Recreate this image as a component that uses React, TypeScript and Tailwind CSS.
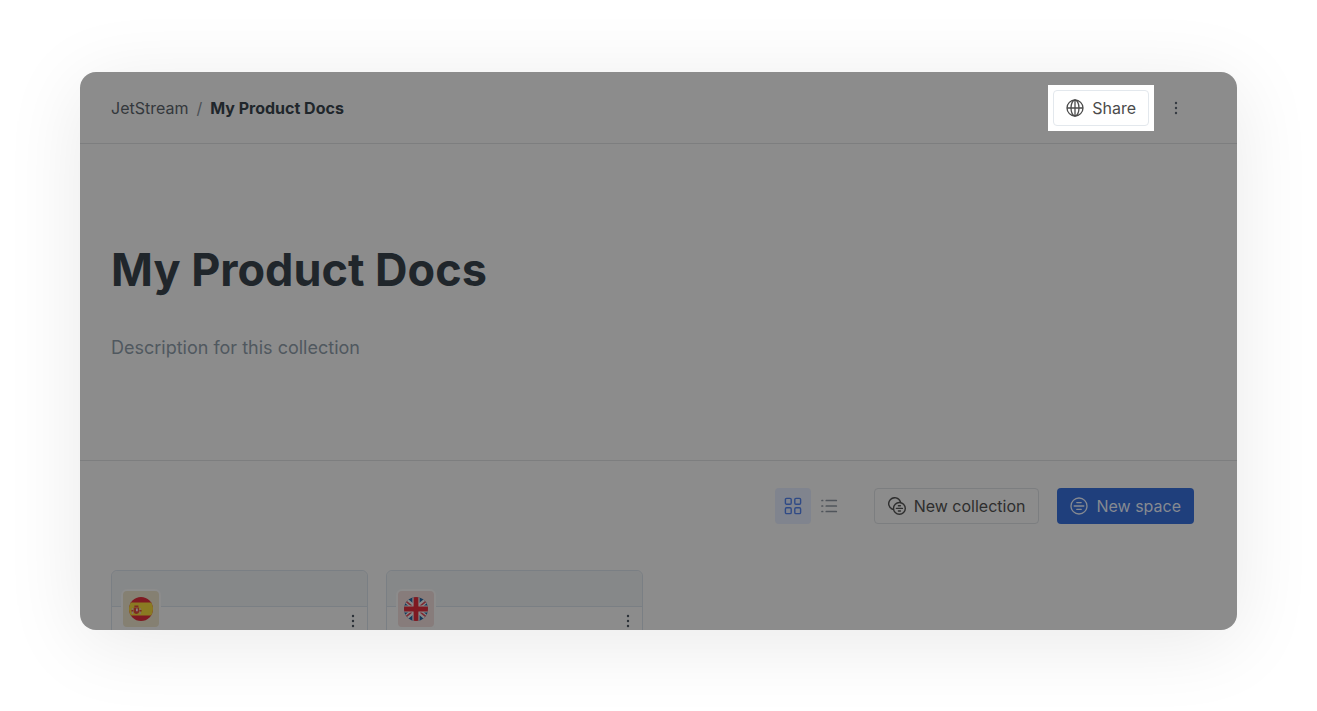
import type { ReactNode } from "react";

function GlobeIcon() {
  return (
    <svg width="18" height="18" viewBox="0 0 18 18" fill="none" stroke="currentColor" strokeWidth="1.3" aria-hidden="true">
      <circle cx="9" cy="9" r="8" />
      <ellipse cx="9" cy="9" rx="4" ry="8" />
      <path d="M1 9h16M9 1v16" />
    </svg>
  );
}

function KebabIcon() {
  return (
    <svg width="16" height="16" viewBox="0 0 16 16" fill="currentColor" aria-hidden="true">
      <circle cx="8" cy="3" r="1.2" />
      <circle cx="8" cy="8" r="1.2" />
      <circle cx="8" cy="13" r="1.2" />
    </svg>
  );
}

function GridIcon() {
  return (
    <svg width="18" height="18" viewBox="0 0 18 18" fill="none" stroke="currentColor" strokeWidth="1.4" aria-hidden="true">
      <rect x="1.4" y="1.4" width="5.8" height="5.8" rx="1.2" />
      <rect x="10.8" y="1.4" width="5.8" height="5.8" rx="1.2" />
      <rect x="1.4" y="10.8" width="5.8" height="5.8" rx="1.2" />
      <rect x="10.8" y="10.8" width="5.8" height="5.8" rx="1.2" />
    </svg>
  );
}

function ListIcon() {
  return (
    <svg width="18" height="18" viewBox="0 0 18 18" fill="none" stroke="currentColor" strokeWidth="1.7" strokeLinecap="round" aria-hidden="true">
      <path d="M6.3 3.5h10M6.3 9h10M6.3 14.5h10M2 3.5h.6M2 9h.6M2 14.5h.6" />
    </svg>
  );
}

function CollectionIcon() {
  return (
    <svg width="18" height="18" viewBox="0 0 18 18" fill="none" stroke="currentColor" strokeWidth="1.4" strokeLinecap="round" aria-hidden="true">
      <path d="M4.8 12.4A6 6 0 1 1 12.4 4.8" />
      <circle cx="11.4" cy="11.4" r="5.9" />
      <path d="M10.4 8.8h2M8.4 11.4h6M10.4 14h2" />
    </svg>
  );
}

function SpaceIcon() {
  return (
    <svg width="18" height="18" viewBox="0 0 18 18" fill="none" stroke="currentColor" strokeWidth="1.3" strokeLinecap="round" aria-hidden="true">
      <circle cx="9" cy="9" r="8" />
      <path d="M6.8 5.6h4.4M4.2 9h9.6M6.8 12.4h4.4" />
    </svg>
  );
}

function SpainFlag() {
  return (
    <svg width="24" height="24" viewBox="0 0 24 24" aria-hidden="true">
      <clipPath id="es-clip">
        <circle cx="12" cy="12" r="12" />
      </clipPath>
      <g clipPath="url(#es-clip)">
        <path fill="#7f1a22" d="M0 0h24v24H0z" />
        <path fill="#8a7a22" d="M0 5.5h24v13H0z" />
        <path fill="#7d2a24" d="M5.4 8.4h4v1.6h-4zM4.8 10.6h5.2v4.2c0 2.8-5.2 2.8-5.2 0z" />
        <path fill="#85706a" d="M2.8 11h1.4v6H2.8zM10.6 11h1.2v6h-1.2z" />
        <path fill="#8d7f80" d="M7 11.6h1.8v2.6H7z" />
        <path fill="#7d2a24" d="M2.4 13h2v1.4h-2zM10.4 13h2.2v1.4h-2.2z" />
      </g>
    </svg>
  );
}

function UkFlag() {
  return (
    <svg width="24" height="24" viewBox="0 0 24 24" aria-hidden="true">
      <clipPath id="uk-clip">
        <circle cx="12" cy="12" r="12" />
      </clipPath>
      <g clipPath="url(#uk-clip)">
        <path fill="#153a5c" d="M0 0h24v24H0z" />
        <path stroke="#888888" strokeWidth="5" d="M0 2l24 20M24 2L0 22" />
        <path stroke="#7f2a32" strokeWidth="1.6" d="M0 2.6l11 9M24 21.4l-11-9M24 2.6l-11 9M0 21.4l11-9" />
        <path stroke="#888888" strokeWidth="7.2" d="M12 0v24M0 12h24" />
        <path stroke="#7f1a22" strokeWidth="4.8" d="M12 0v24M0 12h24" />
      </g>
    </svg>
  );
}

function SpaceCard({ label, tile, children }: { label: string; tile: string; children: ReactNode }) {
  return (
    <article className="h-40 w-[257px] shrink-0 rounded-md border border-[#7a7f84]">
      <div className="h-9 rounded-t-md border-b border-[#7a7f84] bg-[#868889]" />
      <div className="flex items-start justify-between pl-[11px] pr-1">
        <div className={`-mt-4 flex size-9 items-center justify-center rounded-sm ring-2 ring-[#8c8c8c] ${tile}`}>
          {children}
        </div>
        <button type="button" aria-label={`${label} options`} className="flex h-7 w-5 items-center justify-center text-[#2c3238]">
          <KebabIcon />
        </button>
      </div>
    </article>
  );
}

export default function App() {
  return (
    <div className="flex h-screen bg-white px-20 pb-[81px] pt-[72px] font-['Inter',sans-serif] text-base text-[#24282c]">
      <main className="min-w-0 flex-1 overflow-hidden rounded-2xl bg-[#8c8c8c] shadow-[0_12px_80px_rgba(0,0,0,0.09)]">
        <header className="flex h-[72px] items-center justify-between border-b border-[#7d7e7f] pl-[31px] pr-[43px]">
          <nav aria-label="Breadcrumb" className="flex items-center gap-2">
            <a href="#jetstream" className="text-[#34383c]">JetStream</a>
            <span className="text-[#4b5056]">/</span>
            <a href="#docs" className="font-bold text-[#20262b]">My Product Docs</a>
          </nav>
          <div className="flex items-center gap-1">
            <div className="bg-white p-[5px]">
              <button type="button" className="flex h-9 items-center gap-2 rounded border border-[#e3e8ed] px-3 text-[#4b4b4b]">
                <GlobeIcon />
                Share
              </button>
            </div>
            <button type="button" aria-label="Collection options" className="flex size-9 items-center justify-center text-[#363c43]">
              <KebabIcon />
            </button>
          </div>
        </header>

        <section className="border-b border-[#7d7e7f] px-[31px] py-[98px]">
          <h1 className="text-[45px] font-bold leading-[56px] text-[#20262b]">My Product Docs</h1>
          <p className="mt-9 text-lg leading-7 text-[#50585f]">Description for this collection</p>
        </section>

        <div className="flex justify-end pr-[43px] pt-[27px]">
          <button type="button" aria-label="Grid view" className="flex size-9 items-center justify-center rounded bg-[#80848e] text-[#2f4a86]">
            <GridIcon />
          </button>
          <button type="button" aria-label="List view" className="flex size-9 items-center justify-center text-[#50555b]">
            <ListIcon />
          </button>
          <button type="button" className="ml-[27px] flex h-9 items-center gap-2 rounded border border-[#7c7e80] px-[13px] text-[#2e2e2e]">
            <CollectionIcon />
            New collection
          </button>
          <button type="button" className="ml-[18px] flex h-9 items-center gap-2 rounded bg-[#1f3f7c] px-[13px] text-[#868a91]">
            <SpaceIcon />
            New space
          </button>
        </div>

        <div className="flex gap-[18px] px-[31px] pt-[46px]">
          <SpaceCard label="Spanish" tile="bg-[#858072]">
            <SpainFlag />
          </SpaceCard>
          <SpaceCard label="English" tile="bg-[#877c7b]">
            <UkFlag />
          </SpaceCard>
        </div>
      </main>
    </div>
  );
}
